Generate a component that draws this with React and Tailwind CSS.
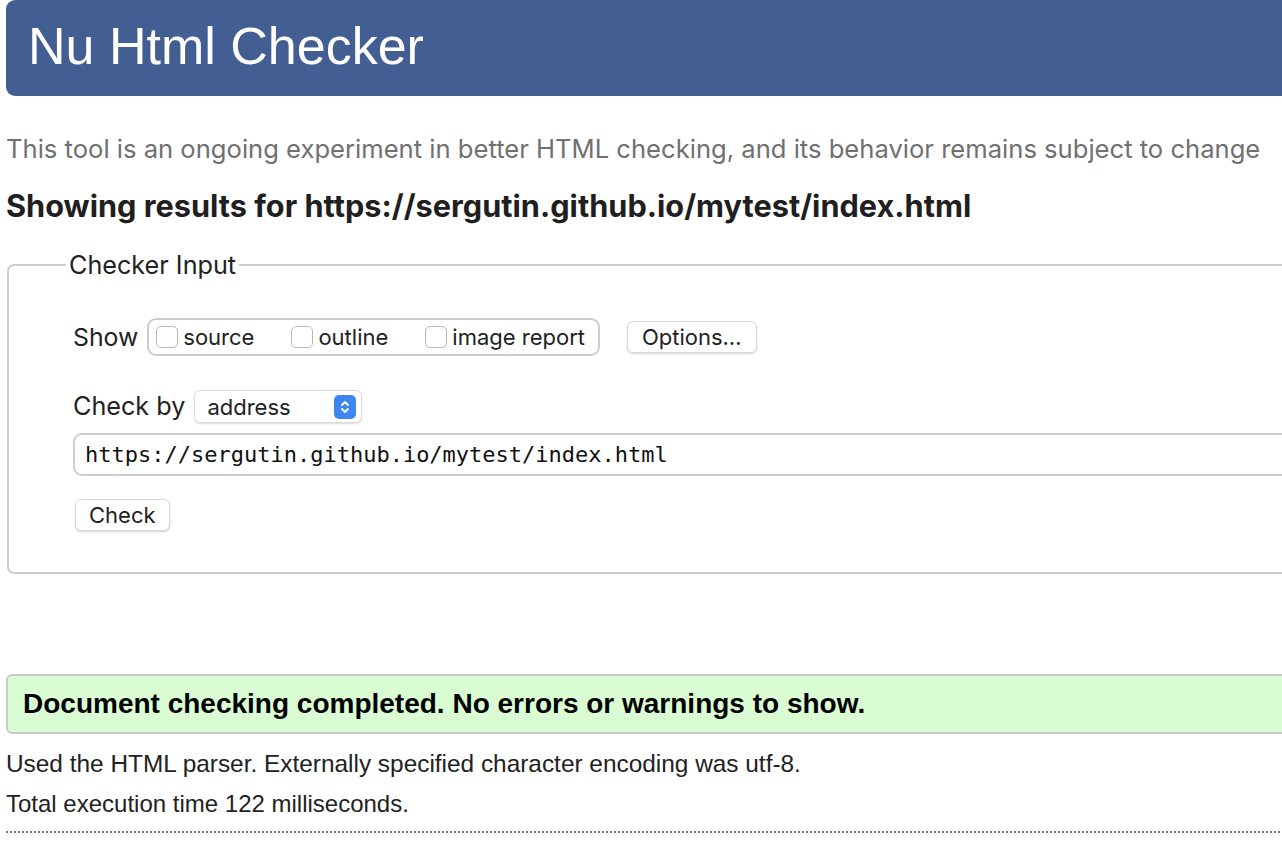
import React from 'react'

const SF = { fontFamily: 'Inter, "Noto Sans", sans-serif' }
const ARIAL = { fontFamily: '"Liberation Sans", Arial, sans-serif' }
const MONO = { fontFamily: '"DejaVu Sans Mono", "Liberation Mono", monospace' }

function Checkbox({ label }) {
  return (
    <label className="flex items-center gap-[5px]">
      <span className="w-[22px] h-[22px] rounded-[5px] border border-[#b9b9b9] bg-white" />
      <span className="text-[22px] leading-none text-[#222]">{label}</span>
    </label>
  )
}

function Stepper() {
  return (
    <span className="w-[22px] h-[24px] rounded-[5px] bg-[#3f86f5] flex items-center justify-center">
      <svg width="10" height="16" viewBox="0 0 10 16" fill="none" stroke="white" strokeWidth="1.8" strokeLinecap="round" strokeLinejoin="round">
        <path d="M2 6 L5 3 L8 6" />
        <path d="M2 10 L5 13 L8 10" />
      </svg>
    </span>
  )
}

export default function App() {
  return (
    <div className="w-[1282px] h-[844px] overflow-hidden bg-white pl-[6px]">
      <header className="h-[96px] -mr-6 bg-[#425e93] rounded-l-[9px] flex items-center pl-[22px]">
        <h1 className="text-[52px] leading-none text-white pb-[4px]" style={ARIAL}>Nu Html Checker</h1>
      </header>

      <p className="mt-[38px] text-[25.6px] leading-[30px] text-[#707070] whitespace-nowrap" style={SF}>
        This tool is an ongoing experiment in better HTML checking, and its behavior remains subject to change
      </p>

      <h2 className="mt-[24px] text-[30.7px] leading-[36px] font-bold text-[#1f1f21] whitespace-nowrap" style={SF}>
        Showing results for https://sergutin.github.io/mytest/index.html
      </h2>

      <fieldset className="mt-[27px] -mr-6 ml-[1px] border-2 border-[#cdcdcd] rounded-l-[7px] pl-[57px] pt-[39px] pb-[41px]" style={SF}>
        <legend className="px-[3px] text-[25.2px] leading-[28px] text-[#222]">Checker Input</legend>

        <div className="pl-[7px]">
          <div className="flex items-center">
            <span className="text-[24.8px] leading-none text-[#222] mr-[9px]">Show</span>
            <div className="h-[38px] flex items-center gap-[37px] border-2 border-[#cdcdcd] rounded-[9px] pl-[7px] pr-[13px]">
              <Checkbox label="source" />
              <Checkbox label="outline" />
              <Checkbox label="image report" />
            </div>
            <button className="ml-[27px] h-[32px] px-[14px] bg-white border border-[#dadada] rounded-[6px] shadow-[0_1px_2px_rgba(0,0,0,0.18)] text-[22px] leading-none text-[#222]">
              Options…
            </button>
          </div>

          <div className="mt-[34px] flex items-center">
            <span className="text-[25.2px] leading-none text-[#222] mr-[9px]">Check by</span>
            <div className="w-[168px] h-[33px] flex items-center justify-between bg-white border border-[#dcdcdc] rounded-[6px] shadow-[0_1px_2px_rgba(0,0,0,0.15)] pl-[12px] pr-[5px]">
              <span className="text-[22px] leading-none text-[#222]">address</span>
              <Stepper />
            </div>
          </div>

          <div className="mt-[10px] h-[43px] flex items-center border-2 border-[#cdcdcd] border-r-0 rounded-l-[9px] pl-[10px]">
            <span className="text-[22px] leading-none text-[#111] whitespace-nowrap" style={MONO}>https://sergutin.github.io/mytest/index.html</span>
          </div>

          <button className="mt-[23px] ml-[2px] h-[32px] px-[13px] bg-white border border-[#dadada] rounded-[6px] shadow-[0_1px_2px_rgba(0,0,0,0.18)] text-[22px] leading-none text-[#222]">
            Check
          </button>
        </div>
      </fieldset>

      <div className="mt-[100px] -mr-6 h-[60px] flex items-center bg-[#d9fcd3] border-2 border-[#c9ccc6] rounded-l-[6px] pl-[15px]" style={ARIAL}>
        <p className="text-[28px] leading-none font-bold text-black whitespace-nowrap">Document checking completed. No errors or warnings to show.</p>
      </div>

      <div style={ARIAL} className="text-[#222]">
        <p className="mt-[16px] text-[24.4px] leading-[28px] whitespace-nowrap">Used the HTML parser. Externally specified character encoding was utf-8.</p>
        <p className="mt-[12px] text-[24px] leading-[28px]">Total execution time 122 milliseconds.</p>
      </div>

      <div className="mt-[13px] mr-[2px] border-t-2 border-dotted border-[#777]" />
    </div>
  )
}
